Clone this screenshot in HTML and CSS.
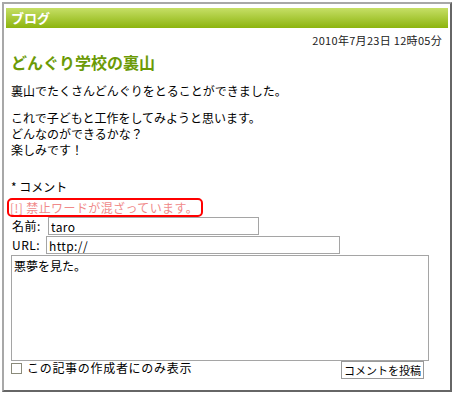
FILE: index.html
```html
<!DOCTYPE html>
<html lang="ja">

<head>
    <meta charset="utf-8">
    <meta name="viewport" content="width=device-width, initial-scale=1.0">
    <title>ブログ</title>
    <link rel="stylesheet" href="styles.css">
</head>

<body>
    <div class="blog">
        <div class="blog-head">ブログ</div>
        <div class="entry">
            <div class="date">2010年7月23日 12時05分</div>
            <h2 class="title">どんぐり学校の裏山</h2>
            <p class="text">裏山でたくさんどんぐりをとることができました。</p>
            <p class="text">これで子どもと工作をしてみようと思います。<br>どんなのができるかな？<br>楽しみです！</p>
            <div class="comment-head">* コメント</div>
            <div class="error">[!] 禁止ワードが混ざっています。</div>
            <form class="comment-form">
                <div class="row">
                    <label class="name-label">名前:</label>
                    <input type="text" class="name" value="taro">
                </div>
                <div class="row">
                    <label class="url-label">URL:</label>
                    <input type="text" class="url" value="http://">
                </div>
                <textarea class="body">悪夢を見た。</textarea>
                <div class="foot">
                    <label class="only"><input type="checkbox" class="check"> この記事の作成者にのみ表示</label>
                    <button type="button" class="send">コメントを投稿</button>
                </div>
            </form>
        </div>
    </div>
</body>

</html>
```

FILE: styles.css
```css
body {
    margin: 0;
    padding: 2px;
    font-family: "Noto Sans CJK JP", "DejaVu Sans", sans-serif;
    font-size: 12px;
    color: #000;
    background: #fff;
}

.blog {
    width: 450px;
    height: 390px;
    box-sizing: border-box;
    border: 2px solid;
    border-color: #a8a8a8 #666 #666 #a8a8a8;
    padding: 4px 2px 0 2px;
}

.blog-head {
    height: 20px;
    line-height: 20px;
    padding-left: 5px;
    color: #fff;
    font-weight: bold;
    font-size: 13px;
    background: linear-gradient(#c6df66, #8cb40e);
}

.entry {
    padding: 0 6px 0 5px;
}

.date {
    margin-top: 5px;
    text-align: right;
    font-size: 11px;
    letter-spacing: 0.3px;
    line-height: 14px;
    color: #222;
}

.title {
    margin: 5px 0 0 0;
    font-size: 16px;
    line-height: 20px;
    font-weight: bold;
    color: #6b9a06;
}

.text {
    margin: 11px 0 0 0;
    line-height: 16px;
}

.comment-head {
    margin-top: 21px;
    line-height: 16px;
}

.error {
    margin: 3px 0 0 -4px;
    width: 196px;
    height: 19px;
    box-sizing: border-box;
    border: 2px solid #f00;
    border-radius: 5px;
    padding-left: 1px;
    line-height: 15px;
    letter-spacing: 0.4px;
    color: #f08a8a;
    white-space: nowrap;
}

.comment-form {
    margin: 0;
}

.row {
    display: flex;
    align-items: flex-start;
    height: 19px;
}

.row label {
    padding-left: 1px;
    line-height: 18px;
    letter-spacing: 0.5px;
}

.name-label {
    width: 36px;
}

.url-label {
    width: 34px;
}

input[type="text"] {
    height: 18px;
    box-sizing: border-box;
    margin: 0;
    padding: 0 2px;
    border: 1px solid #a5a5a5;
    font-family: inherit;
    font-size: 12px;
    letter-spacing: 0.4px;
}

.name {
    width: 211px;
}

.url {
    width: 294px;
}

.body {
    display: block;
    width: 418px;
    height: 106px;
    box-sizing: border-box;
    margin: 0;
    padding: 2px 2px;
    border: 1px solid #a5a5a5;
    font-family: inherit;
    font-size: 12px;
    line-height: 16px;
    resize: none;
}

.foot {
    display: flex;
    justify-content: space-between;
    align-items: flex-start;
    width: 413px;
}

.only {
    display: flex;
    align-items: center;
    gap: 5px;
    line-height: 14px;
    letter-spacing: 0.7px;
}

.check {
    width: 11px;
    height: 11px;
    margin: 0;
    appearance: none;
    border: 1px solid #8a8a7a;
    background: #fff;
}

.send {
    height: 18px;
    padding: 0 2px;
    border: 1px solid #9a9a9a;
    background: #fff;
    font-family: inherit;
    font-size: 11px;
    line-height: 16px;
}
```
